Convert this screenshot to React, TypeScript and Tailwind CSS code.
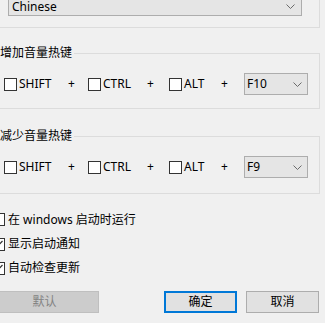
import React from "react";

const font = { fontFamily: '"Noto Sans", "Noto Sans CJK SC", sans-serif' };

function Chevron() {
    return (
        <svg width="9" height="5" viewBox="0 0 9 5" className="shrink-0">
            <path d="M0.5 0.5 L4.5 4.5 L8.5 0.5" fill="none" stroke="#6b6b6b" strokeWidth="1" />
        </svg>
    );
}

function Box({ checked = false }: { checked?: boolean }) {
    return (
        <span className="flex h-[13px] w-[13px] shrink-0 items-center justify-center border border-[#333333] bg-white">
            {checked && (
                <svg width="11" height="11" viewBox="0 0 11 11">
                    <path d="M1.5 5.5 L4 8 L9.5 2" fill="none" stroke="#333333" strokeWidth="1.2" />
                </svg>
            )}
        </span>
    );
}

function Combo({ value, className, textClass = "leading-none" }: { value: string; className: string; textClass?: string }) {
    return (
        <div className={`flex items-center justify-between border border-[#adadad] bg-[#e5e5e5] ${className}`}>
            <span className={`text-[12px] ${textClass}`}>{value}</span>
            <Chevron />
        </div>
    );
}

function KeyItem({ label, width }: { label: string; width: string }) {
    return (
        <div className={`flex items-center gap-[2px] ${width}`}>
            <Box />
            <span className="text-[12px] leading-none">{label}</span>
        </div>
    );
}

function HotkeyGroup({ title, keyName, className }: { title: string; keyName: string; className: string }) {
    return (
        <div className={`relative ml-[-10px] w-[330px] border border-[#dcdcdc] pl-[13px] pt-[19px] ${className}`}>
            <span className="absolute left-[9px] top-[-9px] bg-[#f0f0f0] pr-[2px] text-[12px] leading-[16px]">{title}</span>
            <div className="flex items-center">
                <KeyItem label="SHIFT" width="w-[64px]" />
                <span className="w-[20px] text-[12px] leading-none">+</span>
                <KeyItem label="CTRL" width="w-[59px]" />
                <span className="w-[22px] text-[12px] leading-none">+</span>
                <KeyItem label="ALT" width="w-[52px]" />
                <span className="w-[23px] text-[12px] leading-none">+</span>
                <Combo value={keyName} className="h-[22px] w-[64px] pl-[2px] pr-[5px]" />
            </div>
        </div>
    );
}

function Option({ label, checked, className }: { label: string; checked?: boolean; className: string }) {
    return (
        <div className={`ml-[-8px] flex items-center gap-[3px] ${className}`}>
            <Box checked={checked} />
            <span className="text-[12px] leading-none">{label}</span>
        </div>
    );
}

export default function App() {
    return (
        <div className="h-[323px] w-[325px] overflow-hidden bg-[#f0f0f0] text-black" style={font}>
            <div className="ml-[-10px] mt-[-30px] h-[58px] w-[330px] border border-[#dcdcdc] pl-[17px] pt-[26px]">
                <Combo value="Chinese" className="h-[19px] w-[294px] pl-[3px] pr-[6px]" textClass="leading-[10px]" />
            </div>

            <HotkeyGroup title="增加音量热键" keyName="F10" className="mt-[25px] h-[56px]" />
            <HotkeyGroup title="减少音量热键" keyName="F9" className="mt-[27px] h-[58px]" />

            <Option label="在 windows 启动时运行" className="mt-[13px] h-[25px]" />
            <Option label="显示启动通知" checked className="h-[24px]" />
            <Option label="自动检查更新" checked className="h-[24px]" />

            <div className="mt-[11px] flex h-[22px]">
                <button className="ml-[-10px] h-[22px] w-[109px] border border-[#bfbfbf] bg-[#cccccc] text-[12px] text-[#838383]">默认</button>
                <button className="ml-[65px] h-[22px] w-[73px] border-2 border-[#0078d7] bg-[#e1e1e1] text-[12px]">确定</button>
                <button className="ml-[9px] h-[22px] w-[73px] border border-[#adadad] bg-[#e1e1e1] text-[12px]">取消</button>
            </div>
        </div>
    );
}
